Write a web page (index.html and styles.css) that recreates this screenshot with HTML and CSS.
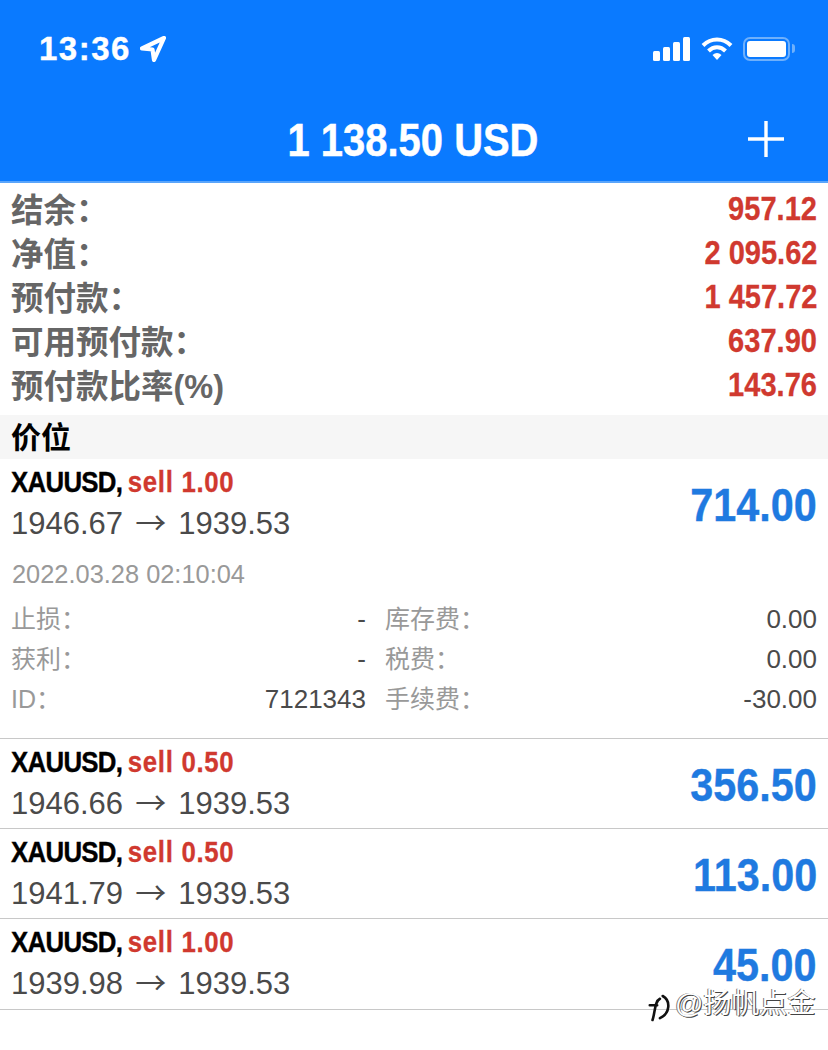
FILE: index.html
```html
<!DOCTYPE html>
<html lang="zh-CN">
<head>
    <meta charset="UTF-8">
    <meta name="viewport" content="width=device-width, initial-scale=1.0">
    <title>交易</title>
    <link rel="stylesheet" href="styles.css">
</head>
<body>

    <!-- Blue header -->
    <header class="header">
        <div class="status-bar">
            <div class="clock">
                <span class="time">13:36</span>
                <svg class="locate" viewBox="0 0 26 26" width="26" height="26">
                    <path d="M24 2 L2 12.500 L12.500 13.500 L14 24 Z" fill="none" stroke="#fff" stroke-width="4.200" stroke-linejoin="round"/>
                </svg>
            </div>
            <div class="status-icons">
                <svg viewBox="0 0 38 24" width="38" height="24">
                    <rect x="0" y="14" width="7" height="10" rx="1.500" fill="#fff"/>
                    <rect x="10" y="10" width="7" height="14" rx="1.500" fill="#fff"/>
                    <rect x="20" y="5" width="7" height="19" rx="1.500" fill="#fff"/>
                    <rect x="30" y="0" width="7" height="24" rx="1.500" fill="#fff"/>
                </svg>
                <svg viewBox="0 0 32 24" width="32" height="24">
                    <path d="M2 8.500 C10 0.500 22 0.500 30 8.500" fill="none" stroke="#fff" stroke-width="4"/>
                    <path d="M7.500 14 C12.500 9 19.500 9 24.500 14" fill="none" stroke="#fff" stroke-width="4"/>
                    <path d="M11.500 18 Q16 14 20.500 18 L16 23 Z" fill="#fff"/>
                </svg>
                <div class="battery">
                    <div class="battery-body"><div class="battery-fill"></div></div>
                    <div class="battery-cap"></div>
                </div>
            </div>
        </div>
        <div class="title-row">
            <h1 class="title">1 138.50 USD</h1>
            <svg class="plus" viewBox="0 0 36 36" width="36" height="36">
                <path d="M18 0 V36 M0 18 H36" stroke="#fff" stroke-width="3.400"/>
            </svg>
        </div>
    </header>

    <!-- Account summary -->
    <section class="summary">
        <div class="summary-row"><span class="summary-label">结余：</span><span class="summary-value">957.12</span></div>
        <div class="summary-row"><span class="summary-label">净值：</span><span class="summary-value">2 095.62</span></div>
        <div class="summary-row"><span class="summary-label">预付款：</span><span class="summary-value">1 457.72</span></div>
        <div class="summary-row"><span class="summary-label">可用预付款：</span><span class="summary-value">637.90</span></div>
        <div class="summary-row"><span class="summary-label">预付款比率(%)</span><span class="summary-value">143.76</span></div>
    </section>

    <div class="section-title">价位</div>

    <!-- Positions -->
    <section class="positions">
        <div class="position position-open">
            <div class="position-main">
                <div class="position-info">
                    <div class="position-name"><span class="symbol">XAUUSD,</span> <span class="side">sell 1.00</span></div>
                    <div class="position-price">1946.67 <span class="arrow">→</span> 1939.53</div>
                </div>
                <div class="profit">714.00</div>
            </div>
            <div class="position-date">2022.03.28 02:10:04</div>
            <div class="details">
                <span class="detail-label">止损：</span><span class="detail-value">-</span>
                <span class="detail-label">库存费：</span><span class="detail-value">0.00</span>
                <span class="detail-label">获利：</span><span class="detail-value">-</span>
                <span class="detail-label">税费：</span><span class="detail-value">0.00</span>
                <span class="detail-label">ID：</span><span class="detail-value">7121343</span>
                <span class="detail-label">手续费：</span><span class="detail-value">-30.00</span>
            </div>
        </div>

        <div class="position">
            <div class="position-main">
                <div class="position-info">
                    <div class="position-name"><span class="symbol">XAUUSD,</span> <span class="side">sell 0.50</span></div>
                    <div class="position-price">1946.66 <span class="arrow">→</span> 1939.53</div>
                </div>
                <div class="profit">356.50</div>
            </div>
        </div>

        <div class="position">
            <div class="position-main">
                <div class="position-info">
                    <div class="position-name"><span class="symbol">XAUUSD,</span> <span class="side">sell 0.50</span></div>
                    <div class="position-price">1941.79 <span class="arrow">→</span> 1939.53</div>
                </div>
                <div class="profit">113.00</div>
            </div>
        </div>

        <div class="position position-last">
            <div class="position-main">
                <div class="position-info">
                    <div class="position-name"><span class="symbol">XAUUSD,</span> <span class="side">sell 1.00</span></div>
                    <div class="position-price">1939.98 <span class="arrow">→</span> 1939.53</div>
                </div>
                <div class="profit">45.00</div>
            </div>
        </div>
    </section>

    <!-- Watermark over the last row -->
    <div class="watermark">
        <svg class="watermark-logo" viewBox="0 0 26 32" width="24" height="30">
            <path d="M3 13 H11 M6 29 C9 20 8 9 14 6 M17 3 C26 8 25 22 14 27" fill="none" stroke="#111" stroke-width="2.800" stroke-linecap="round"/>
        </svg>
        <span>@扬帆点金</span>
    </div>

</body>
</html>
```

FILE: styles.css
```css
/* General Page Styling */
html, body {
    margin: 0;
    padding: 0;
}

body {
    position: relative;
    height: 1050px;
    overflow: hidden;
    background-color: #fff;
    font-family: "Liberation Sans", "Noto Sans CJK SC", sans-serif;
}

/* Header */
.header {
    height: 181px;
    background-color: #0a7aff;
    border-bottom: 2px solid #5aa5fb;
    color: #fff;
}

.status-bar {
    height: 97px;
    padding: 0 33px 0 39px;
    display: flex;
    justify-content: space-between;
    align-items: center;
}

.clock {
    display: flex;
    align-items: center;
    gap: 9px;
}

.time {
    font-size: 33px;
    font-weight: bold;
    letter-spacing: 1.500px;
    -webkit-text-stroke: 0.4px #fff;
}

.status-icons {
    display: flex;
    align-items: center;
    gap: 10px;
}

.battery {
    display: flex;
    align-items: center;
    gap: 2px;
}

.battery-body {
    box-sizing: border-box;
    width: 47px;
    height: 24px;
    padding: 2px;
    border: 2px solid #6fb0fb;
    border-radius: 7px;
}

.battery-fill {
    height: 100%;
    background-color: #fff;
    border-radius: 3px;
}

.battery-cap {
    width: 3px;
    height: 9px;
    background-color: #6fb0fb;
    border-radius: 0 3px 3px 0;
}

.title-row {
    height: 84px;
    padding-right: 44px;
    display: flex;
    align-items: center;
    justify-content: flex-end;
    position: relative;
}

.title {
    position: absolute;
    left: 0;
    right: 0;
    margin: 0;
    text-align: center;
    font-size: 47px;
    font-weight: bold;
    transform: translateX(-1px) scaleX(0.85);
    -webkit-text-stroke: 0.5px #fff;
}

/* Account Summary */
.summary {
    padding: 4px 11px 8px 11px;
}

.summary-row {
    height: 44px;
    display: flex;
    justify-content: space-between;
    align-items: center;
}

.summary-label {
    padding-bottom: 4px;
    font-size: 32.500px;
    font-weight: bold;
    color: #666;
}

.summary-value {
    font-size: 33px;
    font-weight: bold;
    color: #d0392f;
    transform: scaleX(0.88);
    transform-origin: right center;
    -webkit-text-stroke: 0.3px #d0392f;
}

.section-title {
    height: 44px;
    line-height: 46px;
    padding-left: 11px;
    background-color: #f6f6f6;
    font-size: 30px;
    font-weight: bold;
    color: #000;
}

/* Positions */
.position {
    height: 89px;
    padding: 0 11px;
    border-bottom: 1px solid #c8c8c8;
}

.position-open {
    height: 279px;
}

.position-last {
    height: 90px;
}

.position-main {
    height: 89px;
    display: flex;
    justify-content: space-between;
    align-items: center;
}

.position-info {
    padding-bottom: 2px;
}

.position-name {
    height: 41px;
    line-height: 40px;
    font-size: 30px;
    font-weight: bold;
    transform: scaleX(0.86);
    transform-origin: left center;
    white-space: nowrap;
}

.symbol {
    color: #000;
    letter-spacing: -0.8px;
    -webkit-text-stroke: 0.4px #000;
}

.side {
    margin-left: -2px;
    color: #d0392f;
    letter-spacing: 0.8px;
    -webkit-text-stroke: 0.3px #d0392f;
}

.position-price {
    height: 41px;
    line-height: 41px;
    font-size: 31px;
    color: #4a4a4a;
}

.arrow {
    margin: 0 3.500px;
    font-family: "Noto Sans CJK SC", sans-serif;
    line-height: 1;
}

.profit {
    padding-top: 2px;
    font-size: 47px;
    font-weight: bold;
    color: #1f7ae0;
    transform: scaleX(0.88);
    transform-origin: right center;
    -webkit-text-stroke: 0.4px #1f7ae0;
}

.position-date {
    margin-top: 6px;
    margin-left: 1px;
    height: 40px;
    line-height: 40px;
    font-size: 25.400px;
    color: #999;
}

.details {
    margin-top: 5px;
    display: grid;
    grid-template-columns: 200px 155px 150px 301px;
    grid-auto-rows: 40px;
    align-items: center;
}

.detail-label {
    padding-bottom: 4px;
    font-size: 25px;
    color: #999;
}

.detail-value {
    font-size: 26px;
    color: #4a4a4a;
    text-align: right;
}

.detail-label:nth-child(4n+3) {
    padding-left: 19px;
}

/* Watermark */
.watermark {
    position: absolute;
    left: 647px;
    top: 979px;
    display: flex;
    align-items: center;
    gap: 4px;
    font-size: 28px;
    color: #fff;
    text-shadow: 1px 1px 0 #444, -1px 0 0 #777;
}

.watermark-logo {
    margin-top: 14px;
}
```
